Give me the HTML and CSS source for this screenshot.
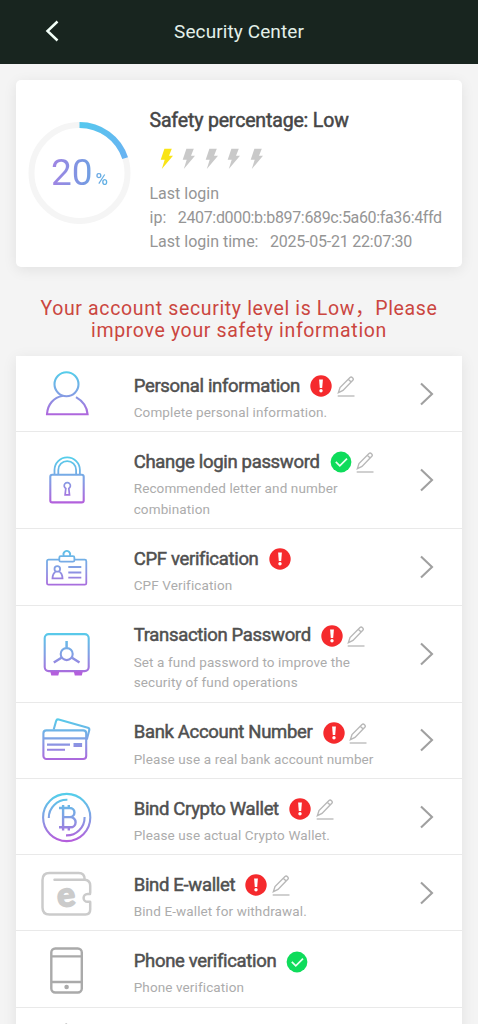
FILE: index.html
```html
<!DOCTYPE html>
<html lang="en">
<head>
<meta charset="utf-8">
<title>Security Center</title>
<link rel="stylesheet" href="styles.css">
</head>
<body>
<svg class="defs" width="0" height="0" aria-hidden="true">
  <defs>
    <linearGradient id="tone" gradientUnits="userSpaceOnUse" x1="0" y1="5" x2="0" y2="50"><stop offset="0" stop-color="#55cdea"/><stop offset=".5" stop-color="#829fe4"/><stop offset="1" stop-color="#b45fdc"/></linearGradient>
    <linearGradient id="arc" gradientUnits="userSpaceOnUse" x1="52" y1="0" x2="98" y2="38"><stop offset="0" stop-color="#55c8ee"/><stop offset="1" stop-color="#69b2f2"/></linearGradient>
    <symbol id="alert" viewBox="0 0 22 22"><circle cx="11" cy="11" r="10.7" fill="#f52a2d"/><path d="M9.1 4.5h3.8l-.7 8.4H9.8z" fill="#fff"/><circle cx="11" cy="15.8" r="1.7" fill="#fff"/></symbol>
    <symbol id="check" viewBox="0 0 22 22"><circle cx="11" cy="11" r="10.4" fill="#0edc5b"/><path d="M5.8 10.9l4 4 7.2-7.3" fill="none" stroke="#e9fff0" stroke-width="1.7"/></symbol>
    <symbol id="edit" viewBox="0 0 18 21"><path d="M1.4 16.6l1.6-5L13 1.5q1.2-1 2.5.2 1.4 1.3.3 2.6L6 14.4zM11.2 3.2l3 2.9" fill="none" stroke="#b8b8b8" stroke-width="1.4"/><path d="M.7 20h16.8" stroke="#bcbcbc" stroke-width="1.4"/></symbol>
    <symbol id="next" viewBox="0 0 14 24"><path d="M1 1.5L12 12 1 22.5" fill="none" stroke="#a0a0a0" stroke-width="2.1"/></symbol>
    <symbol id="bolt" viewBox="0 0 13 22"><path d="M4.4.7h7.4L9 7.8h4L1.8 21l2.9-9.2H.7z"/></symbol>
  </defs>
</svg>

<header class="topbar">
  <svg class="back" viewBox="0 0 14 22"><path d="M12.5 1.5L2.5 11l10 9.5" fill="none" stroke="#f2fff8" stroke-width="2.5"/></svg>
  <h1 class="topbar-title">Security Center</h1>
</header>

<main class="page">
  <section class="summary">
    <div class="gauge">
      <svg class="gauge-ring" viewBox="0 0 103 103" fill="none" stroke-width="6"><circle cx="51.5" cy="51" r="48" stroke="#f5f5f5"/><path d="M51.5 3A48 48 0 0 1 97.15 36.17" stroke="url(#arc)"/></svg>
      <div class="gauge-value">20<span class="gauge-unit">%</span></div>
    </div>
    <div class="summary-info">
      <h2 class="summary-title">Safety percentage: Low</h2>
      <div class="bolts">
        <svg class="bolt bolt-on"><use href="#bolt"/></svg><svg class="bolt"><use href="#bolt"/></svg><svg class="bolt"><use href="#bolt"/></svg><svg class="bolt"><use href="#bolt"/></svg><svg class="bolt"><use href="#bolt"/></svg>
      </div>
      <p class="login">Last login</p>
      <p class="login"><span class="login-label">ip:</span><span class="login-value login-ip">2407:d000:b:b897:689c:5a60:fa36:4ffd</span></p>
      <p class="login"><span class="login-label">Last login time:</span><span class="login-value">2025-05-21 22:07:30</span></p>
    </div>
  </section>

  <p class="warning">Your account security level is Low，Please<br>improve your safety information</p>

  <section class="list">
    <article class="row">
      <svg class="icon" viewBox="0 0 54 54"><circle cx="26.5" cy="17.2" r="12"/><path d="M23 28.8C13.5 30.5 7.5 37.5 7 47.3h40.6C47 40.3 43 34.2 36 30.2"/></svg>
      <div class="row-text"><h3 class="row-title"><span>Personal information</span><svg class="badge"><use href="#alert"/></svg><svg class="edit"><use href="#edit"/></svg></h3><p class="row-desc">Complete personal information.</p></div>
      <svg class="next"><use href="#next"/></svg>
    </article>
    <article class="row row-tall">
      <svg class="icon" viewBox="0 0 54 54"><rect x="10.3" y="21.8" width="33.4" height="27.6" rx="2"/><path d="M14.5 21.5V17a12.7 12.7 0 0 1 25.4 0v4.5M18.3 21.5V17a8.9 8.9 0 0 1 17.8 0v4.5" stroke-width="1.8"/><path d="M25.8 35.4a3.1 3.1 0 1 1 3 0l.7 6.4h-4.4z" stroke-width="1.7"/></svg>
      <div class="row-text"><h3 class="row-title"><span>Change login password</span><svg class="badge"><use href="#check"/></svg><svg class="edit"><use href="#edit"/></svg></h3><p class="row-desc">Recommended letter and number<br>combination</p></div>
      <svg class="next"><use href="#next"/></svg>
    </article>
    <article class="row">
      <svg class="icon icon-fine" viewBox="0 0 54 54"><path d="M19.3 19.7H8.5q-1.5 0-1.5 1.5v22q0 1.5 1.5 1.5h36.3q1.5 0 1.5-1.5v-22q0-1.5-1.5-1.5H34.4"/><rect x="19.3" y="16.2" width="15.1" height="5.5" rx="1.5"/><path d="M24 16a3.3 3.3 0 1 1 5.6 0"/><circle cx="17.3" cy="28.9" r="2.8"/><path d="M15.5 32c-2 1-2.8 2.4-3 6.3h10c-.2-3.9-1-5.3-3-6.3M28.3 27h13M28.3 32.5h13M28.3 37.7h13"/></svg>
      <div class="row-text"><h3 class="row-title"><span>CPF verification</span><svg class="badge"><use href="#alert"/></svg></h3><p class="row-desc">CPF Verification</p></div>
      <svg class="next"><use href="#next"/></svg>
    </article>
    <article class="row row-tall">
      <svg class="icon" viewBox="0 0 54 54"><rect x="4.7" y="7.1" width="44" height="37" rx="4"/><path d="M10.3 44.5h9l-1 4h-7zM33.8 44.5h9l-1 4h-7z" fill="#b45fdc" stroke="none"/><circle cx="26.7" cy="27.1" r="6"/><path d="M26.6 14v6.8M21.4 30.7l-7.6 4.8M32 30.7l7.5 4.8" stroke-width="2.5"/></svg>
      <div class="row-text"><h3 class="row-title"><span>Transaction Password</span><svg class="badge"><use href="#alert"/></svg><svg class="edit"><use href="#edit"/></svg></h3><p class="row-desc">Set a fund password to improve the<br>security of fund operations</p></div>
      <svg class="next"><use href="#next"/></svg>
    </article>
    <article class="row">
      <svg class="icon" viewBox="0 0 54 54"><rect x="3.4" y="17.4" width="42.8" height="28.6" rx="3"/><path d="M13.7 16.5L16.1 8q.6-2 2.6-1.5l29.2 8.3q1.7.6 1.4 2.3l-2.5 9.5M4 25.4h42M7 31.6h23M7 36.8h18"/><path d="M33.5 32h8.6" stroke-width="4"/></svg>
      <div class="row-text"><h3 class="row-title"><span>Bank Account Number</span><svg class="badge"><use href="#alert"/></svg><svg class="edit"><use href="#edit"/></svg></h3><p class="row-desc">Please use a real bank account number</p></div>
      <svg class="next"><use href="#next"/></svg>
    </article>
    <article class="row">
      <svg class="icon" viewBox="0 0 54 54"><circle cx="26.7" cy="27.5" r="23.6"/><path d="M8.8 28a18 18 0 0 1 18.6-18.2M44.6 27A18 18 0 0 1 26 45.4"/><path d="M19 18h10.9a4.5 4.5 0 0 1 0 9.1h-6.8M29.7 27.1h.8a5 5 0 0 1 0 10.2H19M23.1 15v25.5M28.8 15v3M28.8 37.3v3.2" stroke-width="2.4"/></svg>
      <div class="row-text"><h3 class="row-title"><span>Bind Crypto Wallet</span><svg class="badge"><use href="#alert"/></svg><svg class="edit"><use href="#edit"/></svg></h3><p class="row-desc">Please use actual Crypto Wallet.</p></div>
      <svg class="next"><use href="#next"/></svg>
    </article>
    <article class="row">
      <svg class="icon icon-wallet" viewBox="0 0 54 54"><path d="M50.2 27V19.5q0-5-5-5.8H14.5M44.7 13.5q0-6.6-6-6.6H9.5q-7 0-7 7v27.5q0 7 7 7h36q4.7 0 4.7-5V36M50 28h-2.5a3.9 3.9 0 0 0 0 7.8H50"/><text class="wallet-letter" x="17" y="40.5" transform="rotate(-7 26 31)">e</text></svg>
      <div class="row-text"><h3 class="row-title"><span>Bind E-wallet</span><svg class="badge"><use href="#alert"/></svg><svg class="edit"><use href="#edit"/></svg></h3><p class="row-desc">Bind E-wallet for withdrawal.</p></div>
      <svg class="next"><use href="#next"/></svg>
    </article>
    <article class="row">
      <svg class="icon icon-phone" viewBox="0 0 54 54"><rect x="11.3" y="6.5" width="30.5" height="44" rx="4"/><path d="M11.3 14.4h30.5M11.3 40h30.5"/><circle cx="26.6" cy="45" r="1.1"/></svg>
      <div class="row-text"><h3 class="row-title"><span>Phone verification</span><svg class="badge"><use href="#check"/></svg></h3><p class="row-desc">Phone verification</p></div>
    </article>
    <article class="row">
      <svg class="icon icon-phone" viewBox="0 0 54 54"><path d="M7 19L26.2 6.6 46 19v28H7zM7 19l19.5 15L46 19"/></svg>
    </article>
  </section>
</main>
</body>
</html>
```
FILE: styles.css
```css
* { box-sizing: border-box; }
html { height: 1024px; overflow: hidden; }
body {
  margin: 0;
  height: 1024px;
  overflow: hidden;
  background: #f4f4f4;
  font-family: Roboto, "Noto Sans CJK SC", sans-serif;
}
h1, h2, h3, p { margin: 0; font-weight: 400; }
svg { display: block; flex: none; }
.defs { position: absolute; }

.topbar {
  display: grid;
  grid-template-columns: 60px 1fr 60px;
  align-items: center;
  height: 63.5px;
  background: #18251f;
}
.back { width: 14px; height: 22px; margin: -1px 0 0 45px; }
.topbar-title {
  text-align: center;
  font-size: 19px;
  letter-spacing: .1px;
  line-height: 24px;
  color: #e3f0e9;
}

.page { height: 960.5px; padding: 16px 16px 0; overflow: hidden; }
.summary {
  display: flex;
  height: 187px;
  padding: 0 0 0 12px;
  background: #fff;
  border-radius: 5px;
  box-shadow: 0 3px 14px rgba(0, 0, 0, .08);
}
.gauge {
  display: grid;
  width: 103px;
  height: 103px;
  margin-top: 42px;
  place-items: center;
}
.gauge-ring, .gauge-value { grid-area: 1 / 1; }
.gauge-ring { width: 103px; height: 103px; }
.gauge-value {
  margin-top: 6px;
  font-size: 37px;
  line-height: 44px;
  background: linear-gradient(90deg, #a184e3, #7799e2 60%, #5cb3e4);
  -webkit-background-clip: text;
  background-clip: text;
  color: transparent;
}
.gauge-unit { margin-left: 3px; font-size: 17px; font-weight: 500; }
.summary-info { padding: 29px 0 0 18.5px; white-space: nowrap; }
.summary-title {
  font-size: 19.5px;
  line-height: 24px;
  letter-spacing: -.16px;
  color: #464646;
  -webkit-text-stroke: .5px #464646;
}
.bolts { display: flex; gap: 9.5px; height: 22px; margin: 15.5px 0 11.5px 10px; }
.bolt { width: 13px; height: 22px; fill: #c9c9c9; }
.bolt-on { fill: #f9e416; }
.login {
  display: flex;
  font-size: 16px;
  line-height: 24.2px;
  color: #959595;
}
.login-label { margin-right: 11.5px; }
.login-value { letter-spacing: -.23px; }
.login-ip { letter-spacing: -.34px; }

.warning {
  margin-top: 31px;
  text-align: center;
  font-size: 19.5px;
  line-height: 22.5px;
  letter-spacing: .65px;
  color: #cb4640;
  white-space: nowrap;
}

.list {
  margin-top: 13.5px;
  background: #fff;
  box-shadow: 0 3px 14px rgba(0, 0, 0, .08);
}
.row {
  display: flex;
  align-items: center;
  height: 76.3px;
  padding: 0 28px 0 24px;
  border-bottom: 1.5px solid #e9e9e9;
}
.row-tall { height: 97px; }
.icon {
  width: 54px;
  height: 54px;
  fill: none;
  stroke: url(#tone);
  stroke-width: 2.1;
}
.icon-fine { stroke-width: 1.8; }
.icon-wallet { stroke: #cbcbcb; stroke-width: 2.5; stroke-linecap: round; }
.icon-phone { stroke: #aaa; stroke-width: 2.4; }
.wallet-letter {
  font: 900 34px Lato, sans-serif;
  fill: #cbcbcb;
  stroke: #cbcbcb;
  stroke-width: 1.5;
}
.row-text { flex: 1; align-self: flex-start; padding: 17.7px 0 0 39.7px; white-space: nowrap; }
.row-title {
  display: flex;
  align-items: center;
  height: 24px;
  font-size: 18.5px;
  letter-spacing: -.32px;
  color: #505050;
  -webkit-text-stroke: .5px #505050;
}
.badge { width: 22px; height: 22px; margin: 1px 0 0 10px; }
.edit { width: 18px; height: 21px; margin: 2px 0 0 4.7px; }
.row-desc {
  margin-top: 4.3px;
  font-size: 13.5px;
  line-height: 20.7px;
  letter-spacing: .12px;
  color: #acacac;
}
.next { width: 14px; height: 24px; }
```
